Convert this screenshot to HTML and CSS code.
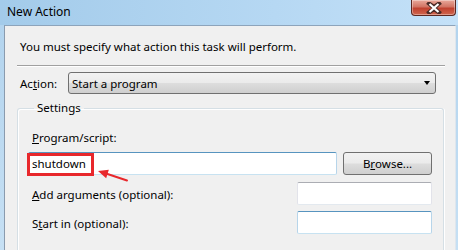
FILE: index.html
```html
<!DOCTYPE html>
<html lang="en">
<head>
    <meta charset="UTF-8">
    <meta name="viewport" content="width=device-width, initial-scale=1.0">
    <title>New Action</title>
    <link rel="stylesheet" href="styles.css">
</head>
<body>
    <div class="window">
        <div class="titlebar">
            <span class="title">New Action</span>
            <div class="close">
                <svg width="16" height="12" viewBox="0 0 16 12">
                    <path d="M3 1.5 L8 5 L13 1.5 M3 10.5 L8 7 L13 10.5 M3 1.5 L13 10.5 M13 1.5 L3 10.5" fill="none" stroke="#4a2a26" stroke-width="4" stroke-linecap="square"/>
                    <path d="M3.5 2 L12.5 10 M12.5 2 L3.5 10" fill="none" stroke="#ffffff" stroke-width="2.2"/>
                </svg>
            </div>
        </div>
        <div class="frame">
            <div class="client">
                <p class="intro">You must specify what action this task will perform.</p>
                <div class="sep"></div>
                <div class="action-row">
                    <label class="action-label">Ac<u>t</u>ion:</label>
                    <div class="combo">
                        <span>Start a program</span>
                        <span class="arrow"></span>
                    </div>
                </div>
                <fieldset class="settings">
                    <legend>Settings</legend>
                    <label class="field-label"><u>P</u>rogram/script:</label>
                    <div class="program-row">
                        <div class="textbox hover program">
                            <span>shutdown</span>
                            <span class="highlight"></span>
                            <svg class="pointer" width="40" height="22" viewBox="0 0 40 22">
                                <path d="M12 10.5 L33 17.5" stroke="#e8282c" stroke-width="2" stroke-linecap="round"/>
                                <path d="M4 8 L14.8 6.8 L12.2 15.2 Z" fill="#e8282c"/>
                            </svg>
                        </div>
                        <div class="button">B<u>r</u>owse...</div>
                    </div>
                    <div class="opt-row">
                        <label><u>A</u>dd arguments (optional):</label>
                        <div class="textbox small"></div>
                    </div>
                    <div class="opt-row last">
                        <label>S<u>t</u>art in (optional):</label>
                        <div class="textbox hover small"></div>
                    </div>
                </fieldset>
            </div>
        </div>
    </div>
</body>
</html>
```

FILE: styles.css
```css
body {
    margin: 0;
    padding: 0;
    width: 458px;
    height: 250px;
    overflow: hidden;
    font-family: "Noto Sans", "Open Sans", sans-serif;
    font-size: 11.5px;
    color: #000;
}
.window {
    width: 458px;
    height: 250px;
    overflow: hidden;
    display: flex;
    flex-direction: column;
    background: linear-gradient(to right, #a3cbea, #b6d8f3 60%, #c4e1f8);
}
.titlebar {
    height: 25px;
    display: flex;
    align-items: flex-start;
    flex-shrink: 0;
}
.title {
    margin: 4px 0 0 7px;
    line-height: 16px;
    font-size: 12px;
}
.close {
    margin-left: auto;
    margin-right: 2px;
    width: 43px;
    height: 15px;
    border: 1px solid #5c2720;
    border-top: none;
    border-radius: 0 0 4px 4px;
    background: linear-gradient(to bottom, #e9a99b, #d27464 45%, #c0412f 55%, #d0664f);
    display: flex;
    align-items: center;
    justify-content: center;
    box-shadow: inset 0 0 0 1px rgba(255, 255, 255, 0.35);
}
.frame {
    flex: 1;
    min-height: 0;
    display: flex;
    padding: 0 2px 0 4px;
    background: linear-gradient(to bottom, #b3d4ee, #c6e0f4);
}
.client {
    flex: 1;
    background-color: #f0f0f0;
    border-left: 1px solid #8a9bae;
    border-top: 1px solid #8da4bb;
    border-right: 1px solid #dfe6ed;
}
.intro {
    margin: 13px 0 0 15px;
    line-height: 16px;
}
.sep {
    margin: 10px 10px 0 12px;
    border-top: 1px solid #a0a0a0;
    border-bottom: 1px solid #fff;
}
.action-row {
    display: flex;
    align-items: center;
    margin: 5px 19px 0 15px;
}
.action-label {
    width: 48px;
}
.combo {
    flex: 1;
    height: 20px;
    border: 1px solid #707070;
    border-radius: 3px;
    background: linear-gradient(to bottom, #f2f2f2, #ebebeb 48%, #dddddd 52%, #cfcfcf);
    display: flex;
    align-items: center;
    justify-content: space-between;
    padding: 0 5px 0 3px;
}
.arrow {
    width: 0;
    height: 0;
    border-left: 3.5px solid transparent;
    border-right: 3.5px solid transparent;
    border-top: 4px solid #000;
}
.settings {
    margin: 6px 11px 0 12px;
    padding: 0 11px 0 10px;
    border: 1px solid #d5dfe5;
    border-bottom: none;
    border-radius: 3px 3px 0 0;
    box-shadow: inset 1px 1px 0 #fff, 1px 0 0 #fff;
    height: 150px;
    box-sizing: border-box;
}
.settings legend {
    margin-left: 6px;
    padding: 0 3px;
    line-height: 16px;
}
.field-label {
    display: block;
    margin: 14px 0 0 4px;
    line-height: 16px;
}
.program-row {
    display: flex;
    gap: 6px;
    margin-top: 6px;
}
.textbox {
    box-sizing: border-box;
    height: 23px;
    background: #fff;
    border: 1px solid;
    border-color: #abadb3 #e2e3ea #e3e9ef #e2e3ea;
    border-radius: 2px;
    display: flex;
    align-items: center;
    padding-left: 3px;
}
.textbox.hover {
    border-color: #5794bf #b7d5ea #c7e2f1 #b7d5ea;
}
.program {
    flex: 1;
    position: relative;
}
.highlight {
    position: absolute;
    left: -2px;
    top: 0;
    width: 67px;
    height: 23px;
    box-sizing: border-box;
    border: 3px solid #e8282c;
}
.pointer {
    position: absolute;
    left: 65px;
    top: 10px;
}
.button {
    box-sizing: border-box;
    width: 89px;
    height: 23px;
    border: 1px solid #707070;
    border-radius: 3px;
    background: linear-gradient(to bottom, #f2f2f2, #ebebeb 48%, #dddddd 52%, #cfcfcf);
    display: flex;
    align-items: center;
    justify-content: center;
}
.opt-row {
    display: flex;
    align-items: center;
    margin-top: 7px;
}
.opt-row.last {
    margin-top: 6px;
}
.opt-row label {
    flex: 1;
    padding: 2px 0 0 4px;
}
.textbox.small {
    width: 135px;
}
```
